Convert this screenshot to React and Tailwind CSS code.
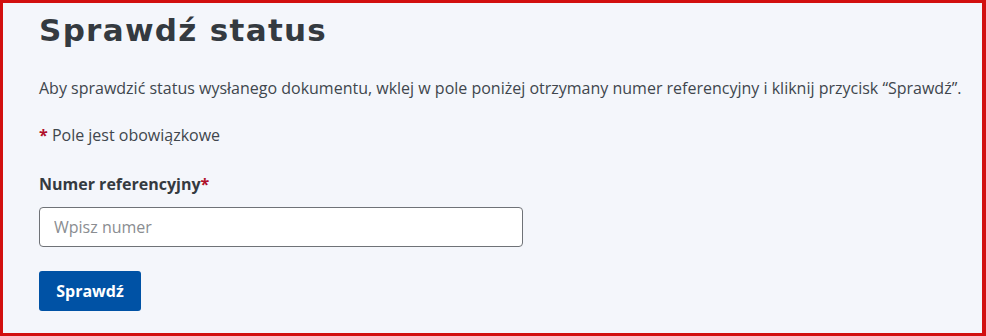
export default function App() {
  return (
    <div className="w-[986px] h-[336px] bg-[#d20f0f] p-[3px] pr-[4px]">
      <div className="w-full h-full bg-[#f4f6fb] pl-[36px] pt-[7px] text-[#343a40]" style={{ fontFamily: '"Open Sans", sans-serif' }}>
        <h1 className="text-[31px] leading-[40px] font-bold text-[#343a40] tracking-[1.3px]" style={{ fontFamily: '"DejaVu Sans", sans-serif' }}>Sprawdź status</h1>
        <p className="mt-[26px] text-[16px] leading-[24px] text-[#40464d]">Aby sprawdzić status wysłanego dokumentu, wklej w pole poniżej otrzymany numer referencyjny i kliknij przycisk “Sprawdź”.</p>
        <p className="mt-[23px] text-[16px] leading-[24px] text-[#40464d]"><span className="text-[#b0102a] font-bold">*</span> Pole jest obowiązkowe</p>
        <label className="block mt-[25px] text-[16px] leading-[24px] font-bold text-[#343a40]">Numer referencyjny<span className="text-[#b0102a]">*</span></label>
        <input
          type="text"
          placeholder="Wpisz numer"
          className="block mt-[11px] w-[484px] h-[40px] bg-white border border-[#6f7277] rounded-[4px] px-[14px] text-[16px] placeholder:text-[#8a8d91] outline-none"
        />
        <button className="block mt-[24px] w-[102px] h-[40px] bg-[#0052a5] rounded-[3px] text-white text-[16px] font-bold">Sprawdź</button>
      </div>
    </div>
  );
}
